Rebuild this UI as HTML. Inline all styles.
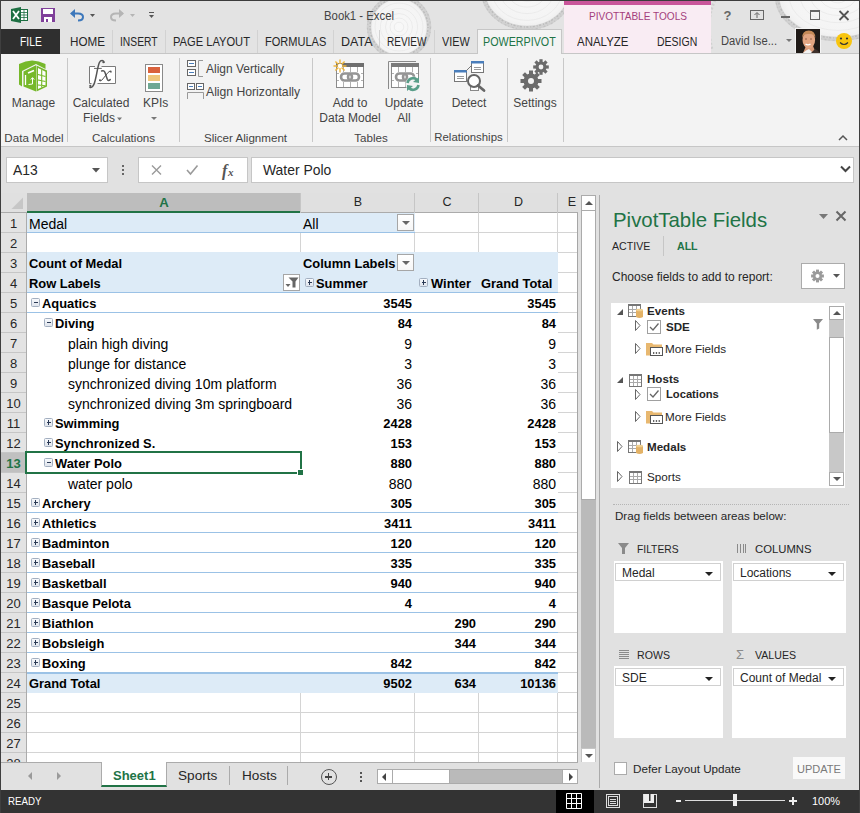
<!DOCTYPE html><html><head><meta charset="utf-8"><style>
*{margin:0;padding:0;box-sizing:border-box}
html,body{width:860px;height:813px;overflow:hidden;background:#e1e1e1;font-family:"Liberation Sans",sans-serif;color:#262626}
.ab{position:absolute}
.t{position:absolute;white-space:nowrap;line-height:1}
</style></head><body>
<div class="ab" style="left:0;top:0;width:860px;height:54px;background:#e3e3e3"></div>
<div class="ab" style="left:0;top:0;width:860px;height:1px;background:#3c3c3c"></div>
<svg class="ab" style="left:0;top:0" width="860" height="54" viewBox="0 0 860 54">
<defs><radialGradient id="wood" cx="0.5" cy="0.5" r="0.5"><stop offset="0" stop-color="#f8f8f8"/><stop offset="0.85" stop-color="#f4f4f4"/><stop offset="1" stop-color="#ededed"/></radialGradient></defs>
<g>
<ellipse cx="399" cy="27" rx="30" ry="30" fill="url(#wood)"/>
<ellipse cx="399" cy="27" rx="30" ry="30" fill="none" stroke="#cbcbcb" stroke-width="4.5" opacity="0.75"/>
<ellipse cx="399" cy="27" rx="29" ry="29" fill="none" stroke="#b4b4b4" stroke-width="1.4" stroke-dasharray="1 2 2 1.5" opacity="0.8"/>
<ellipse cx="399" cy="27" rx="31.5" ry="31.5" fill="none" stroke="#bdbdbd" stroke-width="1.2" stroke-dasharray="2 3 1 2" opacity="0.7"/>
<ellipse cx="399" cy="27" rx="24.0" ry="24.0" fill="none" stroke="#e9e9e9" stroke-width="0.8"/>
<ellipse cx="399" cy="27" rx="18.6" ry="18.6" fill="none" stroke="#e9e9e9" stroke-width="0.8"/>
<ellipse cx="399" cy="27" rx="13.5" ry="13.5" fill="none" stroke="#e9e9e9" stroke-width="0.8"/>
<ellipse cx="399" cy="27" rx="9.0" ry="9.0" fill="none" stroke="#e9e9e9" stroke-width="0.8"/>
<ellipse cx="399" cy="27" rx="4.8" ry="4.8" fill="none" stroke="#e9e9e9" stroke-width="0.8"/>
<ellipse cx="527" cy="-10" rx="44" ry="38" fill="url(#wood)"/>
<ellipse cx="527" cy="-10" rx="44" ry="38" fill="none" stroke="#cbcbcb" stroke-width="4.5" opacity="0.75"/>
<ellipse cx="527" cy="-10" rx="43" ry="37" fill="none" stroke="#b4b4b4" stroke-width="1.4" stroke-dasharray="1 2 2 1.5" opacity="0.8"/>
<ellipse cx="527" cy="-10" rx="45.5" ry="39.5" fill="none" stroke="#bdbdbd" stroke-width="1.2" stroke-dasharray="2 3 1 2" opacity="0.7"/>
<ellipse cx="527" cy="-10" rx="35.2" ry="30.4" fill="none" stroke="#e9e9e9" stroke-width="0.8"/>
<ellipse cx="527" cy="-10" rx="27.3" ry="23.6" fill="none" stroke="#e9e9e9" stroke-width="0.8"/>
<ellipse cx="527" cy="-10" rx="19.8" ry="17.1" fill="none" stroke="#e9e9e9" stroke-width="0.8"/>
<ellipse cx="527" cy="-10" rx="13.2" ry="11.4" fill="none" stroke="#e9e9e9" stroke-width="0.8"/>
<ellipse cx="527" cy="-10" rx="7.0" ry="6.1" fill="none" stroke="#e9e9e9" stroke-width="0.8"/>
<ellipse cx="838" cy="-4" rx="61" ry="43" fill="url(#wood)"/>
<ellipse cx="838" cy="-4" rx="61" ry="43" fill="none" stroke="#cbcbcb" stroke-width="4.5" opacity="0.75"/>
<ellipse cx="838" cy="-4" rx="60" ry="42" fill="none" stroke="#b4b4b4" stroke-width="1.4" stroke-dasharray="1 2 2 1.5" opacity="0.8"/>
<ellipse cx="838" cy="-4" rx="62.5" ry="44.5" fill="none" stroke="#bdbdbd" stroke-width="1.2" stroke-dasharray="2 3 1 2" opacity="0.7"/>
<ellipse cx="838" cy="-4" rx="48.8" ry="34.4" fill="none" stroke="#e9e9e9" stroke-width="0.8"/>
<ellipse cx="838" cy="-4" rx="37.8" ry="26.7" fill="none" stroke="#e9e9e9" stroke-width="0.8"/>
<ellipse cx="838" cy="-4" rx="27.4" ry="19.4" fill="none" stroke="#e9e9e9" stroke-width="0.8"/>
<ellipse cx="838" cy="-4" rx="18.3" ry="12.9" fill="none" stroke="#e9e9e9" stroke-width="0.8"/>
<ellipse cx="838" cy="-4" rx="9.8" ry="6.9" fill="none" stroke="#e9e9e9" stroke-width="0.8"/>
<path d="M715 0 Q705 20 712 50" stroke="#d0d0d0" stroke-width="3" stroke-dasharray="2 2" fill="none"/>
<path d="M608 0 Q620 20 610 54" stroke="#d4d4d4" stroke-width="3" stroke-dasharray="2 2" fill="none"/>
</g>
<!-- excel icon -->
<path d="M11 9 L21 7 L21 23 L11 21 Z" fill="#1d6f42"/>
<rect x="20" y="9" width="8" height="12" fill="#1d6f42"/>
<rect x="21" y="10" width="6" height="10" fill="#fff"/>
<path d="M21 12.5 H27 M21 15 H27 M21 17.5 H27 M24 10 V20" stroke="#1d6f42" stroke-width="0.8"/>
<path d="M13 11 L19 19 M19 11 L13 19" stroke="#fff" stroke-width="1.8"/>
<!-- save -->
<rect x="41" y="8" width="14" height="14" fill="#80409a"/>
<rect x="43" y="9" width="10" height="5" fill="#fff"/>
<rect x="44" y="17" width="8" height="5" fill="#fff"/>
<rect x="46" y="19" width="2" height="3" fill="#80409a"/>
<!-- undo -->
<path d="M71.5 13.5 H78 Q83 13.5 83 17 Q83 20.5 78 20.5" stroke="#3d78bb" stroke-width="2" fill="none"/>
<path d="M70 13.5 L75 9 L75 18 Z" fill="#3d78bb"/>
<path d="M90 14 h5 l-2.5 3z" fill="#555"/>
<path d="M123 13.5 H116 Q111 13.5 111 17 Q111 20.5 116 20.5" stroke="#b5b5b5" stroke-width="2" fill="none"/>
<path d="M124 13.5 L119 9 L119 18 Z" fill="#b5b5b5"/>
<path d="M130 14 h5 l-2.5 3z" fill="#b5b5b5"/>
<rect x="149" y="12" width="5" height="1" fill="#555"/>
<path d="M149 15 h5 l-2.5 3z" fill="#555"/>
<!-- window controls -->
<text x="723.5" y="20" font-family="Liberation Sans" font-weight="bold" font-size="13" fill="#666">?</text>
<rect x="750.5" y="10.5" width="13" height="9" fill="none" stroke="#666"/>
<path d="M757 18 V13 M754.5 15 L757 12.5 L759.5 15" stroke="#666" fill="none"/>
<rect x="781" y="16" width="9" height="2" fill="#666"/>
<rect x="810.5" y="10.5" width="9" height="9" fill="none" stroke="#666"/>
<rect x="810" y="10" width="10" height="2" fill="#666"/>
<path d="M839.5 11 L848.5 20 M848.5 11 L839.5 20" stroke="#555" stroke-width="1.8"/>
<!-- david dropdown -->
<path d="M786 39 h6 l-3 3z" fill="#777"/>
<!-- photo -->
<rect x="795" y="28" width="26" height="26" fill="#f4f4f4"/>
<rect x="796" y="29" width="24" height="24" fill="#1f1a17"/>
<path d="M806 46 L813 46 L816 53 L803 53 Z" fill="#d89a78"/>
<path d="M803 53 Q806 50 809 49 L813 53 Z" fill="#f2f2f2"/>
<path d="M811 53 L815 49 Q818 50 820 53 Z" fill="#3e302b"/>
<ellipse cx="808.8" cy="40" rx="6.3" ry="8.6" fill="#e2a582"/>
<path d="M802.3 38 Q802 30.5 808.8 30.5 Q815.5 30.5 815.3 38 Q814 33.5 808.8 34 Q803.5 33.5 802.3 38 Z" fill="#c58a58"/>
<path d="M805.5 44 Q808 45.8 810.5 44" stroke="#fff" stroke-width="1.4" fill="none"/>
<path d="M805 39 h2 M810 39 h2" stroke="#8a5a44" stroke-width="0.9"/>
<!-- smiley -->
<circle cx="844" cy="41" r="8" fill="#f8c50f"/>
<circle cx="841" cy="38.5" r="1.1" fill="#333"/><circle cx="847" cy="38.5" r="1.1" fill="#333"/>
<path d="M840 42.5 Q844 46.5 848 42.5" stroke="#333" stroke-width="1.1" fill="none"/>
</svg>
<div class="ab" style="left:0;top:0;width:860px;height:1px;background:#3c3c3c"></div>
<div class="ab" style="left:1px;top:29px;width:59px;height:25px;background:#2f2f2f"></div>
<div class="t" style="left:19.5px;top:35.72px;font-size:12.5px;font-weight:normal;color:#fff;transform:scaleX(0.824);transform-origin:0 0">FILE</div>
<div class="t" style="left:70.0px;top:35.72px;font-size:12.5px;font-weight:normal;color:#262626;transform:scaleX(0.933);transform-origin:0 0">HOME</div>
<div class="t" style="left:120.0px;top:35.72px;font-size:12.5px;font-weight:normal;color:#262626;transform:scaleX(0.822);transform-origin:0 0">INSERT</div>
<div class="t" style="left:172.5px;top:35.72px;font-size:12.5px;font-weight:normal;color:#262626;transform:scaleX(0.891);transform-origin:0 0">PAGE LAYOUT</div>
<div class="t" style="left:265.0px;top:35.72px;font-size:12.5px;font-weight:normal;color:#262626;transform:scaleX(0.882);transform-origin:0 0">FORMULAS</div>
<div class="t" style="left:340.75px;top:35.72px;font-size:12.5px;font-weight:normal;color:#262626;transform:scaleX(1.001);transform-origin:0 0">DATA</div>
<div class="t" style="left:387.0px;top:35.72px;font-size:12.5px;font-weight:normal;color:#262626;transform:scaleX(0.801);transform-origin:0 0">REVIEW</div>
<div class="t" style="left:441.5px;top:35.72px;font-size:12.5px;font-weight:normal;color:#262626;transform:scaleX(0.869);transform-origin:0 0">VIEW</div>
<div class="ab" style="left:112px;top:30px;width:1px;height:23px;background:#d2d2d2"></div>
<div class="ab" style="left:165px;top:30px;width:1px;height:23px;background:#d2d2d2"></div>
<div class="ab" style="left:257px;top:30px;width:1px;height:23px;background:#d2d2d2"></div>
<div class="ab" style="left:333px;top:30px;width:1px;height:23px;background:#d2d2d2"></div>
<div class="ab" style="left:379px;top:30px;width:1px;height:23px;background:#d2d2d2"></div>
<div class="ab" style="left:434px;top:30px;width:1px;height:23px;background:#d2d2d2"></div>
<div class="ab" style="left:564px;top:1px;width:147px;height:53px;background:#f9ecf3"></div>
<div class="ab" style="left:564px;top:1px;width:147px;height:4px;background:#c9559a"></div>
<div class="t" style="left:588.5px;top:10.52px;font-size:11.2px;font-weight:normal;color:#a4407c;transform:scaleX(0.901);transform-origin:0 0">PIVOTTABLE TOOLS</div>
<div class="t" style="left:577.0px;top:35.72px;font-size:12.5px;font-weight:normal;color:#262626;transform:scaleX(0.919);transform-origin:0 0">ANALYZE</div>
<div class="t" style="left:657.0px;top:35.72px;font-size:12.5px;font-weight:normal;color:#262626;transform:scaleX(0.840);transform-origin:0 0">DESIGN</div>
<div class="ab" style="left:477px;top:29px;width:85px;height:26px;background:#f3f3f3;border:1px solid #c6c6c6;border-bottom:none"></div>
<div class="t" style="left:482.75px;top:35.72px;font-size:12.5px;font-weight:normal;color:#217346;transform:scaleX(0.859);transform-origin:0 0">POWERPIVOT</div>
<div class="t" style="left:323.5px;top:9.67px;font-size:12.2px;font-weight:normal;color:#444;transform:scaleX(0.931);transform-origin:0 0">Book1 - Excel</div>
<div class="t" style="left:720.75px;top:35.12px;font-size:12.5px;font-weight:normal;color:#444;transform:scaleX(0.896);transform-origin:0 0">David Ise...</div>
<div class="ab" style="left:1px;top:53px;width:858px;height:94px;background:#f3f3f3;border-top:1px solid #c6c6c6;border-bottom:1px solid #c6c6c6"></div>
<div class="ab" style="left:478px;top:52px;width:83px;height:3px;background:#f3f3f3"></div>
<div class="ab" style="left:1px;top:53px;width:59px;height:1px;background:#2f2f2f"></div>
<div class="ab" style="left:67px;top:58px;width:1px;height:84px;background:#c8c8c8"></div>
<div class="ab" style="left:179px;top:58px;width:1px;height:84px;background:#c8c8c8"></div>
<div class="ab" style="left:312px;top:58px;width:1px;height:84px;background:#c8c8c8"></div>
<div class="ab" style="left:430px;top:58px;width:1px;height:84px;background:#c8c8c8"></div>
<div class="ab" style="left:507px;top:58px;width:1px;height:84px;background:#c8c8c8"></div>
<div class="ab" style="left:563px;top:58px;width:1px;height:84px;background:#c8c8c8"></div>
<div class="t" style="left:-66.5px;width:200px;text-align:center;top:96.84px;font-size:12px;color:#444">Manage</div>
<div class="t" style="left:-66px;width:200px;text-align:center;top:131.68px;font-size:11.6px;color:#444">Data Model</div>
<div class="t" style="left:1px;width:200px;text-align:center;top:96.84px;font-size:12px;color:#444">Calculated</div>
<div class="t" style="left:83px;top:112.34px;font-size:12px;color:#444;">Fields</div>
<div class="t" style="left:143px;top:96.84px;font-size:12px;color:#444;">KPIs</div>
<div class="t" style="left:23.5px;width:200px;text-align:center;top:131.68px;font-size:11.6px;color:#444">Calculations</div>
<div class="t" style="left:206px;top:63.34px;font-size:12px;color:#444;">Align Vertically</div>
<div class="t" style="left:206px;top:85.67px;font-size:12.2px;color:#444;">Align Horizontally</div>
<div class="t" style="left:145.5px;width:200px;text-align:center;top:131.68px;font-size:11.6px;color:#444">Slicer Alignment</div>
<div class="t" style="left:250px;width:200px;text-align:center;top:96.84px;font-size:12px;color:#444">Add to</div>
<div class="t" style="left:250px;width:200px;text-align:center;top:111.84px;font-size:12px;color:#444">Data Model</div>
<div class="t" style="left:304px;width:200px;text-align:center;top:96.84px;font-size:12px;color:#444">Update</div>
<div class="t" style="left:304px;width:200px;text-align:center;top:111.84px;font-size:12px;color:#444">All</div>
<div class="t" style="left:271px;width:200px;text-align:center;top:131.68px;font-size:11.6px;color:#444">Tables</div>
<div class="t" style="left:369px;width:200px;text-align:center;top:96.84px;font-size:12px;color:#444">Detect</div>
<div class="t" style="left:435px;width:200px;text-align:center;top:96.84px;font-size:12px;color:#444">Settings</div>
<div class="t" style="left:368.5px;width:200px;text-align:center;top:131.85px;font-size:11.4px;color:#444">Relationships</div>
<svg class="ab" style="left:0;top:0" width="860" height="150" viewBox="0 0 860 150">
<!-- manage -->
<path d="M19 64 Q32 57 45.5 64 L45.5 69 L36 64 L22 71 L22 86.5 L19 84.5 Z" fill="#76b82a"/>
<path d="M23.5 71.5 L36 65.3 L36 91.5 L23.5 86.5 Z" fill="#76b82a"/>
<path d="M36.5 65.5 L47 70.5 L47 86.5 L36.5 91.5 Z" fill="#76b82a"/>
<path d="M38 68 L45.5 71.8 L45.5 85.5 L38 89 Z" fill="#fff"/>
<path d="M41.7 69.5 V87.5 M38 74.5 L45.5 76.5 M38 80 L45.5 81.5 M38 85 L45.5 85.8" stroke="#76b82a" stroke-width="1.1"/>
<path d="M25.5 75 V85" stroke="#fff" stroke-width="1.3"/>
<path d="M28 73 L34 70.5" stroke="#fff" stroke-width="1.6"/>
<path d="M32.5 84 V78 M30.8 79.6 L32.5 77.6 L34.2 79.6 M28.5 84.5 L32.5 84" stroke="#fff" stroke-width="1" fill="none"/>
<!-- fx -->
<path d="M89.5 66.5 H95 M101.5 66.5 H115.5 V83.5 H97.5 M91.5 83.5 H89.5 V66.5" fill="none" stroke="#7a7a7a" stroke-width="1"/>
<rect x="90" y="67" width="25" height="16" fill="#fff"/>
<path d="M104 62.3 C103.8 60.2 100.8 59.8 99.4 62.5 C97.8 65.5 96.6 76 94.6 82.5 C93.6 86 91.8 88 89.9 87.2" fill="none" stroke="#555" stroke-width="1.5" stroke-linecap="round"/>
<circle cx="103.4" cy="62.2" r="1.1" fill="#555"/><circle cx="90.3" cy="85.8" r="1.1" fill="#555"/>
<path d="M94 68.4 H101.8" stroke="#555" stroke-width="0.9"/>
<path d="M101.6 71 Q104 70 105 72.6 L107.3 79.2 Q108.2 81.6 110.2 79.6" fill="none" stroke="#555" stroke-width="1.5" stroke-linecap="round"/>
<path d="M111.2 71.8 Q110 70.2 108 72.5 L102 80 Q100.6 81.6 99.6 80.4" fill="none" stroke="#555" stroke-width="1" stroke-linecap="round"/>
<circle cx="110.6" cy="71.6" r="1" fill="#555"/><circle cx="100" cy="80.3" r="1" fill="#555"/>
<path d="M117 117.5 h5 l-2.5 3z" fill="#777"/>
<!-- KPI -->
<rect x="145.5" y="64.5" width="17" height="27" fill="#fff" stroke="#8a8a8a"/>
<rect x="148" y="67" width="12" height="6" fill="#d9623d"/>
<rect x="148" y="75" width="12" height="6" fill="#efc77c"/>
<rect x="148" y="83" width="12" height="6" fill="#6fa893"/>
<path d="M151 117 h6 l-3 3z" fill="#777"/>
<!-- align vertically -->
<rect x="187.5" y="60.5" width="8" height="6" fill="#fff" stroke="#666"/>
<rect x="189" y="63" width="5" height="1" fill="#4a7ebb"/>
<rect x="187.5" y="69.5" width="8" height="6" fill="#fff" stroke="#666"/>
<rect x="189" y="72" width="5" height="1" fill="#4a7ebb"/>
<path d="M203 60.5 H198.5 V76.5 H203" fill="none" stroke="#999"/>
<!-- align horizontally -->
<rect x="187.5" y="83.5" width="7" height="6" fill="#fff" stroke="#666"/>
<rect x="189" y="86" width="4" height="1" fill="#4a7ebb"/>
<rect x="196.5" y="83.5" width="7" height="6" fill="#fff" stroke="#666"/>
<rect x="198" y="86" width="4" height="1" fill="#4a7ebb"/>
<path d="M187.5 99 V92.5 H203.5 V99" fill="none" stroke="#999"/>
<!-- add to data model -->
<rect x="336.5" y="63.5" width="27" height="24" fill="#fff" stroke="#8a8a8a"/>
<rect x="336" y="63" width="28" height="4" fill="#6e6e6e"/>
<path d="M337 73.5 H363 M337 80.5 H363 M343.5 67 V87 M350.5 67 V87 M357.5 67 V87" stroke="#b0b0b0" stroke-width="1"/>
<rect x="339" y="72" width="22" height="10" fill="#fff"/>
<rect x="341" y="73.5" width="11" height="7" rx="3.5" fill="none" stroke="#959595" stroke-width="2.6"/>
<rect x="348" y="73.5" width="11" height="7" rx="3.5" fill="none" stroke="#959595" stroke-width="2.6"/>
<g stroke="#efb63c" stroke-width="1.4"><path d="M340 59.5 V72.5 M333.5 66 H346.5 M335.4 61.4 L344.6 70.6 M344.6 61.4 L335.4 70.6"/></g>
<circle cx="340" cy="66" r="2.2" fill="#fff"/>
<!-- update all -->
<path d="M388.5 89 V61.5 H416" fill="none" stroke="#8a8a8a"/>
<rect x="391.5" y="63.5" width="27" height="24" fill="#fff" stroke="#8a8a8a"/>
<rect x="391" y="63" width="28" height="4" fill="#7a7a7a"/>
<path d="M392 73.5 H418 M392 80.5 H418 M398.5 67 V87 M405.5 67 V87 M412.5 67 V87" stroke="#b0b0b0" stroke-width="1"/>
<rect x="394" y="72" width="22" height="10" fill="#fff"/>
<rect x="396" y="73.5" width="11" height="7" rx="3.5" fill="none" stroke="#959595" stroke-width="2.6"/>
<rect x="403" y="73.5" width="11" height="7" rx="3.5" fill="none" stroke="#959595" stroke-width="2.6"/>
<circle cx="413" cy="84" r="7.5" fill="#f3f3f3"/>
<path d="M407.5 83 A5.5 5.5 0 0 1 417 80" stroke="#5a9e89" stroke-width="2.6" fill="none"/>
<path d="M419 77 L419 83 L413 82 Z" fill="#5a9e89"/>
<path d="M418.5 85 A5.5 5.5 0 0 1 409 88" stroke="#5a9e89" stroke-width="2.6" fill="none"/>
<path d="M407 91 L407 85 L413 86 Z" fill="#5a9e89"/>
<!-- detect -->
<rect x="454.5" y="70.5" width="12" height="11" fill="#fff" stroke="#777"/>
<rect x="454" y="70" width="13" height="2.5" fill="#4a7ebb"/>
<path d="M457 76.5 H464 M457 78.5 H464" stroke="#999"/>
<rect x="471.5" y="61.5" width="12" height="11" fill="#fff" stroke="#777"/>
<rect x="471" y="61" width="13" height="2.5" fill="#4a7ebb"/>
<path d="M474 67.5 H481 M474 69.5 H481" stroke="#999"/>
<path d="M466 71 L471 66" stroke="#777"/>
<rect x="470.5" y="85.5" width="8" height="5" fill="#fff" stroke="#888"/>
<circle cx="474" cy="81" r="6" fill="#fff" stroke="#666" stroke-width="2"/>
<path d="M478 85.5 L484 90.5" stroke="#666" stroke-width="2.8" stroke-linecap="round"/>
<!-- settings -->
<g fill="#6b6b6b">
<circle cx="531" cy="81" r="7.5"/>
<g transform="translate(531 81)"><rect x="-2" y="-10.5" width="4" height="21"/><rect x="-2" y="-10.5" width="4" height="21" transform="rotate(45)"/><rect x="-2" y="-10.5" width="4" height="21" transform="rotate(90)"/><rect x="-2" y="-10.5" width="4" height="21" transform="rotate(135)"/></g>
<circle cx="541" cy="67" r="5.5"/>
<g transform="translate(541 67)"><rect x="-1.6" y="-7.8" width="3.2" height="15.6"/><rect x="-1.6" y="-7.8" width="3.2" height="15.6" transform="rotate(45)"/><rect x="-1.6" y="-7.8" width="3.2" height="15.6" transform="rotate(90)"/><rect x="-1.6" y="-7.8" width="3.2" height="15.6" transform="rotate(135)"/></g>
</g>
<circle cx="531" cy="81" r="3" fill="#f3f3f3"/>
<circle cx="541" cy="67" r="2.4" fill="#f3f3f3"/>
<!-- collapse -->
<path d="M839 140 L843 136 L847 140" stroke="#555" stroke-width="1.5" fill="none"/>
</svg>
<div class="ab" style="left:6px;top:157px;width:102px;height:26px;background:#fff;border:1px solid #c6c6c6"></div>
<div class="t" style="left:13px;top:163.5px;font-size:13.9px;color:#262626">A13</div>
<div class="ab" style="left:138px;top:157px;width:110px;height:26px;background:#fff;border:1px solid #c6c6c6"></div>
<div class="ab" style="left:251px;top:157px;width:603px;height:26px;background:#fff;border:1px solid #c6c6c6"></div>
<div class="t" style="left:263px;top:163.5px;font-size:13.9px;color:#262626">Water Polo</div>
<svg class="ab" style="left:0;top:150px" width="860" height="45" viewBox="0 150 860 45">
<path d="M92 168 h8 l-4 4.5z" fill="#555"/>
<rect x="122" y="165" width="2" height="2" fill="#666"/><rect x="122" y="169" width="2" height="2" fill="#666"/><rect x="122" y="173" width="2" height="2" fill="#666"/>
<path d="M152 165.5 L161 174.5 M161 165.5 L152 174.5" stroke="#9a9a9a" stroke-width="1.4"/>
<path d="M187 170 L190.5 174 L197.5 165.5" stroke="#9a9a9a" stroke-width="1.6" fill="none"/>
<text x="222" y="176" font-family="Liberation Serif" font-style="italic" font-weight="bold" font-size="16" fill="#555">f</text>
<text x="228" y="176" font-family="Liberation Serif" font-style="italic" font-weight="bold" font-size="11" fill="#555">x</text>
<path d="M841 166.5 L845.5 171 L850 166.5" stroke="#444" stroke-width="2" fill="none"/>
<path d="M9 209 L23 195 L23 209 Z" fill="#c6c6c6"/>
</svg>
<div class="ab" style="left:1px;top:193px;width:577px;height:570px;background:#fff"></div>
<div class="ab" style="left:1px;top:193px;width:577px;height:20px;background:#e0e0e0;border-bottom:1px solid #ababab"></div>
<div class="ab" style="left:27px;top:193px;width:274px;height:20px;background:#bdbdbd;border-bottom:2px solid #217346"></div>
<div class="t" style="left:27px;top:195.63px;width:274px;text-align:center;font-size:13.2px;font-weight:bold;color:#217346">A</div>
<div class="ab" style="left:300px;top:193px;width:1px;height:20px;background:#c6c6c6"></div>
<div class="t" style="left:301px;top:196.22px;width:114px;text-align:center;font-size:12.5px;font-weight:normal;color:#262626">B</div>
<div class="ab" style="left:414px;top:193px;width:1px;height:20px;background:#c6c6c6"></div>
<div class="t" style="left:415px;top:196.22px;width:64px;text-align:center;font-size:12.5px;font-weight:normal;color:#262626">C</div>
<div class="ab" style="left:478px;top:193px;width:1px;height:20px;background:#c6c6c6"></div>
<div class="t" style="left:479px;top:196.22px;width:79px;text-align:center;font-size:12.5px;font-weight:normal;color:#262626">D</div>
<div class="ab" style="left:557px;top:193px;width:1px;height:20px;background:#c6c6c6"></div>
<div class="t" style="left:562px;top:196.22px;width:20px;text-align:center;font-size:12.5px;font-weight:normal;color:#262626">E</div>
<svg class="ab" style="left:0;top:193px" width="27" height="20"><path d="M11.5 16 L23 4.5 L23 16 Z" fill="#c6c6c6"/></svg>
<div class="ab" style="left:1px;top:213px;width:26px;height:550px;background:#e3e3e3;border-right:1px solid #ababab"></div>
<div class="ab" style="left:1px;top:213px;width:25px;height:20px;background:transparent;border-bottom:1px solid #c6c6c6"></div>
<div class="t" style="left:1px;top:217px;width:25px;text-align:center;font-size:13px;font-weight:normal;color:#262626">1</div>
<div class="ab" style="left:1px;top:233px;width:25px;height:20px;background:transparent;border-bottom:1px solid #c6c6c6"></div>
<div class="t" style="left:1px;top:237px;width:25px;text-align:center;font-size:13px;font-weight:normal;color:#262626">2</div>
<div class="ab" style="left:1px;top:253px;width:25px;height:20px;background:transparent;border-bottom:1px solid #c6c6c6"></div>
<div class="t" style="left:1px;top:257px;width:25px;text-align:center;font-size:13px;font-weight:normal;color:#262626">3</div>
<div class="ab" style="left:1px;top:273px;width:25px;height:20px;background:transparent;border-bottom:1px solid #c6c6c6"></div>
<div class="t" style="left:1px;top:277px;width:25px;text-align:center;font-size:13px;font-weight:normal;color:#262626">4</div>
<div class="ab" style="left:1px;top:293px;width:25px;height:20px;background:transparent;border-bottom:1px solid #c6c6c6"></div>
<div class="t" style="left:1px;top:297px;width:25px;text-align:center;font-size:13px;font-weight:normal;color:#262626">5</div>
<div class="ab" style="left:1px;top:313px;width:25px;height:20px;background:transparent;border-bottom:1px solid #c6c6c6"></div>
<div class="t" style="left:1px;top:317px;width:25px;text-align:center;font-size:13px;font-weight:normal;color:#262626">6</div>
<div class="ab" style="left:1px;top:333px;width:25px;height:20px;background:transparent;border-bottom:1px solid #c6c6c6"></div>
<div class="t" style="left:1px;top:337px;width:25px;text-align:center;font-size:13px;font-weight:normal;color:#262626">7</div>
<div class="ab" style="left:1px;top:353px;width:25px;height:20px;background:transparent;border-bottom:1px solid #c6c6c6"></div>
<div class="t" style="left:1px;top:357px;width:25px;text-align:center;font-size:13px;font-weight:normal;color:#262626">8</div>
<div class="ab" style="left:1px;top:373px;width:25px;height:20px;background:transparent;border-bottom:1px solid #c6c6c6"></div>
<div class="t" style="left:1px;top:377px;width:25px;text-align:center;font-size:13px;font-weight:normal;color:#262626">9</div>
<div class="ab" style="left:1px;top:393px;width:25px;height:20px;background:transparent;border-bottom:1px solid #c6c6c6"></div>
<div class="t" style="left:1px;top:397px;width:25px;text-align:center;font-size:13px;font-weight:normal;color:#262626">10</div>
<div class="ab" style="left:1px;top:413px;width:25px;height:20px;background:transparent;border-bottom:1px solid #c6c6c6"></div>
<div class="t" style="left:1px;top:417px;width:25px;text-align:center;font-size:13px;font-weight:normal;color:#262626">11</div>
<div class="ab" style="left:1px;top:433px;width:25px;height:20px;background:transparent;border-bottom:1px solid #c6c6c6"></div>
<div class="t" style="left:1px;top:437px;width:25px;text-align:center;font-size:13px;font-weight:normal;color:#262626">12</div>
<div class="ab" style="left:1px;top:453px;width:25px;height:20px;background:#c0c0c0;border-bottom:1px solid #c6c6c6"></div>
<div class="t" style="left:1px;top:457px;width:25px;text-align:center;font-size:13px;font-weight:bold;color:#217346">13</div>
<div class="ab" style="left:1px;top:473px;width:25px;height:20px;background:transparent;border-bottom:1px solid #c6c6c6"></div>
<div class="t" style="left:1px;top:477px;width:25px;text-align:center;font-size:13px;font-weight:normal;color:#262626">14</div>
<div class="ab" style="left:1px;top:493px;width:25px;height:20px;background:transparent;border-bottom:1px solid #c6c6c6"></div>
<div class="t" style="left:1px;top:497px;width:25px;text-align:center;font-size:13px;font-weight:normal;color:#262626">15</div>
<div class="ab" style="left:1px;top:513px;width:25px;height:20px;background:transparent;border-bottom:1px solid #c6c6c6"></div>
<div class="t" style="left:1px;top:517px;width:25px;text-align:center;font-size:13px;font-weight:normal;color:#262626">16</div>
<div class="ab" style="left:1px;top:533px;width:25px;height:20px;background:transparent;border-bottom:1px solid #c6c6c6"></div>
<div class="t" style="left:1px;top:537px;width:25px;text-align:center;font-size:13px;font-weight:normal;color:#262626">17</div>
<div class="ab" style="left:1px;top:553px;width:25px;height:20px;background:transparent;border-bottom:1px solid #c6c6c6"></div>
<div class="t" style="left:1px;top:557px;width:25px;text-align:center;font-size:13px;font-weight:normal;color:#262626">18</div>
<div class="ab" style="left:1px;top:573px;width:25px;height:20px;background:transparent;border-bottom:1px solid #c6c6c6"></div>
<div class="t" style="left:1px;top:577px;width:25px;text-align:center;font-size:13px;font-weight:normal;color:#262626">19</div>
<div class="ab" style="left:1px;top:593px;width:25px;height:20px;background:transparent;border-bottom:1px solid #c6c6c6"></div>
<div class="t" style="left:1px;top:597px;width:25px;text-align:center;font-size:13px;font-weight:normal;color:#262626">20</div>
<div class="ab" style="left:1px;top:613px;width:25px;height:20px;background:transparent;border-bottom:1px solid #c6c6c6"></div>
<div class="t" style="left:1px;top:617px;width:25px;text-align:center;font-size:13px;font-weight:normal;color:#262626">21</div>
<div class="ab" style="left:1px;top:633px;width:25px;height:20px;background:transparent;border-bottom:1px solid #c6c6c6"></div>
<div class="t" style="left:1px;top:637px;width:25px;text-align:center;font-size:13px;font-weight:normal;color:#262626">22</div>
<div class="ab" style="left:1px;top:653px;width:25px;height:20px;background:transparent;border-bottom:1px solid #c6c6c6"></div>
<div class="t" style="left:1px;top:657px;width:25px;text-align:center;font-size:13px;font-weight:normal;color:#262626">23</div>
<div class="ab" style="left:1px;top:673px;width:25px;height:20px;background:transparent;border-bottom:1px solid #c6c6c6"></div>
<div class="t" style="left:1px;top:677px;width:25px;text-align:center;font-size:13px;font-weight:normal;color:#262626">24</div>
<div class="ab" style="left:1px;top:693px;width:25px;height:20px;background:transparent;border-bottom:1px solid #c6c6c6"></div>
<div class="t" style="left:1px;top:697px;width:25px;text-align:center;font-size:13px;font-weight:normal;color:#262626">25</div>
<div class="ab" style="left:1px;top:713px;width:25px;height:20px;background:transparent;border-bottom:1px solid #c6c6c6"></div>
<div class="t" style="left:1px;top:717px;width:25px;text-align:center;font-size:13px;font-weight:normal;color:#262626">26</div>
<div class="ab" style="left:1px;top:733px;width:25px;height:20px;background:transparent;border-bottom:1px solid #c6c6c6"></div>
<div class="t" style="left:1px;top:737px;width:25px;text-align:center;font-size:13px;font-weight:normal;color:#262626">27</div>
<div class="ab" style="left:1px;top:753px;width:25px;height:20px;background:transparent;border-bottom:1px solid #c6c6c6"></div>
<div class="t" style="left:1px;top:757px;width:25px;text-align:center;font-size:13px;font-weight:normal;color:#262626">28</div>
<div class="ab" style="left:27px;top:232px;width:551px;height:1px;background:#d4d4d4"></div>
<div class="ab" style="left:27px;top:252px;width:551px;height:1px;background:#d4d4d4"></div>
<div class="ab" style="left:27px;top:272px;width:551px;height:1px;background:#d4d4d4"></div>
<div class="ab" style="left:27px;top:292px;width:551px;height:1px;background:#d4d4d4"></div>
<div class="ab" style="left:27px;top:312px;width:551px;height:1px;background:#d4d4d4"></div>
<div class="ab" style="left:27px;top:332px;width:551px;height:1px;background:#d4d4d4"></div>
<div class="ab" style="left:27px;top:352px;width:551px;height:1px;background:#d4d4d4"></div>
<div class="ab" style="left:27px;top:372px;width:551px;height:1px;background:#d4d4d4"></div>
<div class="ab" style="left:27px;top:392px;width:551px;height:1px;background:#d4d4d4"></div>
<div class="ab" style="left:27px;top:412px;width:551px;height:1px;background:#d4d4d4"></div>
<div class="ab" style="left:27px;top:432px;width:551px;height:1px;background:#d4d4d4"></div>
<div class="ab" style="left:27px;top:452px;width:551px;height:1px;background:#d4d4d4"></div>
<div class="ab" style="left:27px;top:472px;width:551px;height:1px;background:#d4d4d4"></div>
<div class="ab" style="left:27px;top:492px;width:551px;height:1px;background:#d4d4d4"></div>
<div class="ab" style="left:27px;top:512px;width:551px;height:1px;background:#d4d4d4"></div>
<div class="ab" style="left:27px;top:532px;width:551px;height:1px;background:#d4d4d4"></div>
<div class="ab" style="left:27px;top:552px;width:551px;height:1px;background:#d4d4d4"></div>
<div class="ab" style="left:27px;top:572px;width:551px;height:1px;background:#d4d4d4"></div>
<div class="ab" style="left:27px;top:592px;width:551px;height:1px;background:#d4d4d4"></div>
<div class="ab" style="left:27px;top:612px;width:551px;height:1px;background:#d4d4d4"></div>
<div class="ab" style="left:27px;top:632px;width:551px;height:1px;background:#d4d4d4"></div>
<div class="ab" style="left:27px;top:652px;width:551px;height:1px;background:#d4d4d4"></div>
<div class="ab" style="left:27px;top:672px;width:551px;height:1px;background:#d4d4d4"></div>
<div class="ab" style="left:27px;top:692px;width:551px;height:1px;background:#d4d4d4"></div>
<div class="ab" style="left:27px;top:712px;width:551px;height:1px;background:#d4d4d4"></div>
<div class="ab" style="left:27px;top:732px;width:551px;height:1px;background:#d4d4d4"></div>
<div class="ab" style="left:27px;top:752px;width:551px;height:1px;background:#d4d4d4"></div>
<div class="ab" style="left:27px;top:772px;width:551px;height:1px;background:#d4d4d4"></div>
<div class="ab" style="left:300px;top:213px;width:1px;height:550px;background:#d4d4d4"></div>
<div class="ab" style="left:414px;top:213px;width:1px;height:550px;background:#d4d4d4"></div>
<div class="ab" style="left:478px;top:213px;width:1px;height:550px;background:#d4d4d4"></div>
<div class="ab" style="left:557px;top:213px;width:1px;height:550px;background:#d4d4d4"></div>
<div class="ab" style="left:577px;top:213px;width:1px;height:550px;background:#d4d4d4"></div>
<div class="ab" style="left:27px;top:253px;width:531px;height:440px;background:#fff"></div>
<div class="ab" style="left:27px;top:213px;width:388px;height:20px;background:#ddebf7;border-bottom:1px solid #9bc2e6"></div>
<div class="ab" style="left:27px;top:233px;width:388px;height:19px;background:#fff"></div>
<div class="ab" style="left:300px;top:233px;width:1px;height:20px;background:#d4d4d4"></div>
<div class="ab" style="left:414px;top:233px;width:1px;height:20px;background:#d4d4d4"></div>
<div class="ab" style="left:27px;top:252px;width:531px;height:41px;background:#ddebf7;border-bottom:1px solid #9bc2e6"></div>
<div class="ab" style="left:27px;top:312px;width:531px;height:1px;background:#9bc2e6"></div>
<div class="ab" style="left:27px;top:512px;width:531px;height:1px;background:#9bc2e6"></div>
<div class="ab" style="left:27px;top:532px;width:531px;height:1px;background:#9bc2e6"></div>
<div class="ab" style="left:27px;top:552px;width:531px;height:1px;background:#9bc2e6"></div>
<div class="ab" style="left:27px;top:572px;width:531px;height:1px;background:#9bc2e6"></div>
<div class="ab" style="left:27px;top:592px;width:531px;height:1px;background:#9bc2e6"></div>
<div class="ab" style="left:27px;top:612px;width:531px;height:1px;background:#9bc2e6"></div>
<div class="ab" style="left:27px;top:632px;width:531px;height:1px;background:#9bc2e6"></div>
<div class="ab" style="left:27px;top:652px;width:531px;height:1px;background:#9bc2e6"></div>
<div class="ab" style="left:27px;top:672px;width:531px;height:1px;background:#9bc2e6"></div>
<div class="ab" style="left:27px;top:673px;width:531px;height:20px;background:#ddebf7;border-top:1px solid #9bc2e6"></div>
<div class="t" style="left:29px;top:217.15px;font-size:14.0px;font-weight:normal;color:#000">Medal</div>
<div class="t" style="left:303px;top:217.15px;font-size:14.0px;font-weight:normal;color:#000">All</div>
<div class="ab" style="left:397px;top:214px;width:17px;height:17px;border:1px solid #a6a6a6;background:linear-gradient(#fff,#f6f6f6)"><div class="ab" style="left:3.5px;top:6px;width:0;height:0;border-left:4.5px solid transparent;border-right:4.5px solid transparent;border-top:4.5px solid #666"></div></div>
<div class="t" style="left:29px;top:258.08px;font-size:12.9px;font-weight:bold;color:#000">Count of Medal</div>
<div class="t" style="left:303px;top:258.08px;font-size:12.9px;font-weight:bold;color:#000">Column Labels</div>
<div class="ab" style="left:397px;top:254px;width:17px;height:17px;border:1px solid #a6a6a6;background:linear-gradient(#fff,#f6f6f6)"><div class="ab" style="left:3.5px;top:6px;width:0;height:0;border-left:4.5px solid transparent;border-right:4.5px solid transparent;border-top:4.5px solid #666"></div></div>
<div class="t" style="left:29px;top:278.08px;font-size:12.9px;font-weight:bold;color:#000">Row Labels</div>
<svg class="ab" style="left:283px;top:274px" width="17" height="17" viewBox="283 274 17 17"><rect x="283.5" y="274.5" width="16" height="16" fill="#fff" stroke="#a6a6a6"/><path d="M288.5 277.5 H298.5 L295.5 281.5 V287.5 H292.5 V281.5 Z" fill="#666"/><path d="M285.5 284 h5 l-2.5 3z" fill="#666"/></svg>
<div class="ab" style="left:305px;top:278px;width:9px;height:9px;border:1px solid #a3afc0;border-radius:1.5px;background:linear-gradient(#f7f9fc,#dfe4ec)"><div class="ab" style="left:1.5px;top:3px;width:4.5px;height:1px;background:#2b3a55"></div><div class="ab" style="left:3.3px;top:1px;width:1px;height:5px;background:#2b3a55"></div></div>
<div class="t" style="left:316px;top:278.08px;font-size:12.9px;font-weight:bold;color:#000">Summer</div>
<div class="ab" style="left:419px;top:278px;width:9px;height:9px;border:1px solid #a3afc0;border-radius:1.5px;background:linear-gradient(#f7f9fc,#dfe4ec)"><div class="ab" style="left:1.5px;top:3px;width:4.5px;height:1px;background:#2b3a55"></div><div class="ab" style="left:3.3px;top:1px;width:1px;height:5px;background:#2b3a55"></div></div>
<div class="t" style="left:431px;top:278.08px;font-size:12.9px;font-weight:bold;color:#000">Winter</div>
<div class="t" style="left:481px;top:278.08px;font-size:12.9px;font-weight:bold;color:#000">Grand Total</div>
<div class="ab" style="left:31px;top:298px;width:9px;height:9px;border:1px solid #a3afc0;border-radius:1.5px;background:linear-gradient(#f7f9fc,#dfe4ec)"><div class="ab" style="left:1.5px;top:3px;width:4.5px;height:1px;background:#2b3a55"></div></div>
<div class="t" style="left:42px;top:298.08px;font-size:12.9px;font-weight:bold;color:#000">Aquatics</div>
<div class="t" style="right:448px;top:298.08px;font-size:12.9px;font-weight:bold;color:#000">3545</div>
<div class="t" style="right:304px;top:298.08px;font-size:12.9px;font-weight:bold;color:#000">3545</div>
<div class="ab" style="left:44px;top:318px;width:9px;height:9px;border:1px solid #a3afc0;border-radius:1.5px;background:linear-gradient(#f7f9fc,#dfe4ec)"><div class="ab" style="left:1.5px;top:3px;width:4.5px;height:1px;background:#2b3a55"></div></div>
<div class="t" style="left:55px;top:318.08px;font-size:12.9px;font-weight:bold;color:#000">Diving</div>
<div class="t" style="right:448px;top:318.08px;font-size:12.9px;font-weight:bold;color:#000">84</div>
<div class="t" style="right:304px;top:318.08px;font-size:12.9px;font-weight:bold;color:#000">84</div>
<div class="t" style="left:68px;top:337.15px;font-size:14.0px;font-weight:normal;color:#000">plain high diving</div>
<div class="t" style="right:448px;top:337.15px;font-size:14.0px;font-weight:normal;color:#000">9</div>
<div class="t" style="right:304px;top:337.15px;font-size:14.0px;font-weight:normal;color:#000">9</div>
<div class="t" style="left:68px;top:357.15px;font-size:14.0px;font-weight:normal;color:#000">plunge for distance</div>
<div class="t" style="right:448px;top:357.15px;font-size:14.0px;font-weight:normal;color:#000">3</div>
<div class="t" style="right:304px;top:357.15px;font-size:14.0px;font-weight:normal;color:#000">3</div>
<div class="t" style="left:68px;top:377.15px;font-size:14.0px;font-weight:normal;color:#000">synchronized diving 10m platform</div>
<div class="t" style="right:448px;top:377.15px;font-size:14.0px;font-weight:normal;color:#000">36</div>
<div class="t" style="right:304px;top:377.15px;font-size:14.0px;font-weight:normal;color:#000">36</div>
<div class="t" style="left:68px;top:397.15px;font-size:14.0px;font-weight:normal;color:#000">synchronized diving 3m springboard</div>
<div class="t" style="right:448px;top:397.15px;font-size:14.0px;font-weight:normal;color:#000">36</div>
<div class="t" style="right:304px;top:397.15px;font-size:14.0px;font-weight:normal;color:#000">36</div>
<div class="ab" style="left:44px;top:418px;width:9px;height:9px;border:1px solid #a3afc0;border-radius:1.5px;background:linear-gradient(#f7f9fc,#dfe4ec)"><div class="ab" style="left:1.5px;top:3px;width:4.5px;height:1px;background:#2b3a55"></div><div class="ab" style="left:3.3px;top:1px;width:1px;height:5px;background:#2b3a55"></div></div>
<div class="t" style="left:55px;top:418.08px;font-size:12.9px;font-weight:bold;color:#000">Swimming</div>
<div class="t" style="right:448px;top:418.08px;font-size:12.9px;font-weight:bold;color:#000">2428</div>
<div class="t" style="right:304px;top:418.08px;font-size:12.9px;font-weight:bold;color:#000">2428</div>
<div class="ab" style="left:44px;top:438px;width:9px;height:9px;border:1px solid #a3afc0;border-radius:1.5px;background:linear-gradient(#f7f9fc,#dfe4ec)"><div class="ab" style="left:1.5px;top:3px;width:4.5px;height:1px;background:#2b3a55"></div><div class="ab" style="left:3.3px;top:1px;width:1px;height:5px;background:#2b3a55"></div></div>
<div class="t" style="left:55px;top:438.08px;font-size:12.9px;font-weight:bold;color:#000">Synchronized S.</div>
<div class="t" style="right:448px;top:438.08px;font-size:12.9px;font-weight:bold;color:#000">153</div>
<div class="t" style="right:304px;top:438.08px;font-size:12.9px;font-weight:bold;color:#000">153</div>
<div class="ab" style="left:44px;top:458px;width:9px;height:9px;border:1px solid #a3afc0;border-radius:1.5px;background:linear-gradient(#f7f9fc,#dfe4ec)"><div class="ab" style="left:1.5px;top:3px;width:4.5px;height:1px;background:#2b3a55"></div></div>
<div class="t" style="left:55px;top:458.08px;font-size:12.9px;font-weight:bold;color:#000">Water Polo</div>
<div class="t" style="right:448px;top:458.08px;font-size:12.9px;font-weight:bold;color:#000">880</div>
<div class="t" style="right:304px;top:458.08px;font-size:12.9px;font-weight:bold;color:#000">880</div>
<div class="t" style="left:68px;top:477.15px;font-size:14.0px;font-weight:normal;color:#000">water polo</div>
<div class="t" style="right:448px;top:477.15px;font-size:14.0px;font-weight:normal;color:#000">880</div>
<div class="t" style="right:304px;top:477.15px;font-size:14.0px;font-weight:normal;color:#000">880</div>
<div class="ab" style="left:31px;top:498px;width:9px;height:9px;border:1px solid #a3afc0;border-radius:1.5px;background:linear-gradient(#f7f9fc,#dfe4ec)"><div class="ab" style="left:1.5px;top:3px;width:4.5px;height:1px;background:#2b3a55"></div><div class="ab" style="left:3.3px;top:1px;width:1px;height:5px;background:#2b3a55"></div></div>
<div class="t" style="left:42px;top:498.08px;font-size:12.9px;font-weight:bold;color:#000">Archery</div>
<div class="t" style="right:448px;top:498.08px;font-size:12.9px;font-weight:bold;color:#000">305</div>
<div class="t" style="right:304px;top:498.08px;font-size:12.9px;font-weight:bold;color:#000">305</div>
<div class="ab" style="left:31px;top:518px;width:9px;height:9px;border:1px solid #a3afc0;border-radius:1.5px;background:linear-gradient(#f7f9fc,#dfe4ec)"><div class="ab" style="left:1.5px;top:3px;width:4.5px;height:1px;background:#2b3a55"></div><div class="ab" style="left:3.3px;top:1px;width:1px;height:5px;background:#2b3a55"></div></div>
<div class="t" style="left:42px;top:518.08px;font-size:12.9px;font-weight:bold;color:#000">Athletics</div>
<div class="t" style="right:448px;top:518.08px;font-size:12.9px;font-weight:bold;color:#000">3411</div>
<div class="t" style="right:304px;top:518.08px;font-size:12.9px;font-weight:bold;color:#000">3411</div>
<div class="ab" style="left:31px;top:538px;width:9px;height:9px;border:1px solid #a3afc0;border-radius:1.5px;background:linear-gradient(#f7f9fc,#dfe4ec)"><div class="ab" style="left:1.5px;top:3px;width:4.5px;height:1px;background:#2b3a55"></div><div class="ab" style="left:3.3px;top:1px;width:1px;height:5px;background:#2b3a55"></div></div>
<div class="t" style="left:42px;top:538.08px;font-size:12.9px;font-weight:bold;color:#000">Badminton</div>
<div class="t" style="right:448px;top:538.08px;font-size:12.9px;font-weight:bold;color:#000">120</div>
<div class="t" style="right:304px;top:538.08px;font-size:12.9px;font-weight:bold;color:#000">120</div>
<div class="ab" style="left:31px;top:558px;width:9px;height:9px;border:1px solid #a3afc0;border-radius:1.5px;background:linear-gradient(#f7f9fc,#dfe4ec)"><div class="ab" style="left:1.5px;top:3px;width:4.5px;height:1px;background:#2b3a55"></div><div class="ab" style="left:3.3px;top:1px;width:1px;height:5px;background:#2b3a55"></div></div>
<div class="t" style="left:42px;top:558.08px;font-size:12.9px;font-weight:bold;color:#000">Baseball</div>
<div class="t" style="right:448px;top:558.08px;font-size:12.9px;font-weight:bold;color:#000">335</div>
<div class="t" style="right:304px;top:558.08px;font-size:12.9px;font-weight:bold;color:#000">335</div>
<div class="ab" style="left:31px;top:578px;width:9px;height:9px;border:1px solid #a3afc0;border-radius:1.5px;background:linear-gradient(#f7f9fc,#dfe4ec)"><div class="ab" style="left:1.5px;top:3px;width:4.5px;height:1px;background:#2b3a55"></div><div class="ab" style="left:3.3px;top:1px;width:1px;height:5px;background:#2b3a55"></div></div>
<div class="t" style="left:42px;top:578.08px;font-size:12.9px;font-weight:bold;color:#000">Basketball</div>
<div class="t" style="right:448px;top:578.08px;font-size:12.9px;font-weight:bold;color:#000">940</div>
<div class="t" style="right:304px;top:578.08px;font-size:12.9px;font-weight:bold;color:#000">940</div>
<div class="ab" style="left:31px;top:598px;width:9px;height:9px;border:1px solid #a3afc0;border-radius:1.5px;background:linear-gradient(#f7f9fc,#dfe4ec)"><div class="ab" style="left:1.5px;top:3px;width:4.5px;height:1px;background:#2b3a55"></div><div class="ab" style="left:3.3px;top:1px;width:1px;height:5px;background:#2b3a55"></div></div>
<div class="t" style="left:42px;top:598.08px;font-size:12.9px;font-weight:bold;color:#000">Basque Pelota</div>
<div class="t" style="right:448px;top:598.08px;font-size:12.9px;font-weight:bold;color:#000">4</div>
<div class="t" style="right:304px;top:598.08px;font-size:12.9px;font-weight:bold;color:#000">4</div>
<div class="ab" style="left:31px;top:618px;width:9px;height:9px;border:1px solid #a3afc0;border-radius:1.5px;background:linear-gradient(#f7f9fc,#dfe4ec)"><div class="ab" style="left:1.5px;top:3px;width:4.5px;height:1px;background:#2b3a55"></div><div class="ab" style="left:3.3px;top:1px;width:1px;height:5px;background:#2b3a55"></div></div>
<div class="t" style="left:42px;top:618.08px;font-size:12.9px;font-weight:bold;color:#000">Biathlon</div>
<div class="t" style="right:384px;top:618.08px;font-size:12.9px;font-weight:bold;color:#000">290</div>
<div class="t" style="right:304px;top:618.08px;font-size:12.9px;font-weight:bold;color:#000">290</div>
<div class="ab" style="left:31px;top:638px;width:9px;height:9px;border:1px solid #a3afc0;border-radius:1.5px;background:linear-gradient(#f7f9fc,#dfe4ec)"><div class="ab" style="left:1.5px;top:3px;width:4.5px;height:1px;background:#2b3a55"></div><div class="ab" style="left:3.3px;top:1px;width:1px;height:5px;background:#2b3a55"></div></div>
<div class="t" style="left:42px;top:638.08px;font-size:12.9px;font-weight:bold;color:#000">Bobsleigh</div>
<div class="t" style="right:384px;top:638.08px;font-size:12.9px;font-weight:bold;color:#000">344</div>
<div class="t" style="right:304px;top:638.08px;font-size:12.9px;font-weight:bold;color:#000">344</div>
<div class="ab" style="left:31px;top:658px;width:9px;height:9px;border:1px solid #a3afc0;border-radius:1.5px;background:linear-gradient(#f7f9fc,#dfe4ec)"><div class="ab" style="left:1.5px;top:3px;width:4.5px;height:1px;background:#2b3a55"></div><div class="ab" style="left:3.3px;top:1px;width:1px;height:5px;background:#2b3a55"></div></div>
<div class="t" style="left:42px;top:658.08px;font-size:12.9px;font-weight:bold;color:#000">Boxing</div>
<div class="t" style="right:448px;top:658.08px;font-size:12.9px;font-weight:bold;color:#000">842</div>
<div class="t" style="right:304px;top:658.08px;font-size:12.9px;font-weight:bold;color:#000">842</div>
<div class="t" style="left:29px;top:678.08px;font-size:12.9px;font-weight:bold;color:#000">Grand Total</div>
<div class="t" style="right:448px;top:678.08px;font-size:12.9px;font-weight:bold;color:#000">9502</div>
<div class="t" style="right:384px;top:678.08px;font-size:12.9px;font-weight:bold;color:#000">634</div>
<div class="t" style="right:304px;top:678.08px;font-size:12.9px;font-weight:bold;color:#000">10136</div>
<div class="ab" style="left:25px;top:451px;width:277px;height:23px;border:2px solid #217346"></div>
<div class="ab" style="left:297px;top:469px;width:7px;height:7px;background:#217346;border:1px solid #fff"></div>
<div class="ab" style="left:577px;top:213px;width:1px;height:550px;background:#a6a6a6"></div>
<div class="ab" style="left:581px;top:195px;width:15px;height:567px;background:#bababa"></div>
<div class="ab" style="left:581px;top:210px;width:15px;height:290px;background:#fff;border:1px solid #ababab"></div>
<div class="ab" style="left:581px;top:195px;width:15px;height:16px;background:#fff;border:1px solid #ababab"><div class="ab" style="left:3px;top:5px;border-left:4px solid transparent;border-right:4px solid transparent;border-bottom:4px solid #555"></div></div>
<div class="ab" style="left:581px;top:748px;width:15px;height:15px;background:#fff;border:1px solid #c6c6c6"><div class="ab" style="left:3px;top:5px;border-left:4px solid transparent;border-right:4px solid transparent;border-top:4px solid #555"></div></div>
<div class="ab" style="left:1px;top:762px;width:598px;height:28px;background:#e1e1e1"></div>
<div class="ab" style="left:1px;top:762px;width:577px;height:1px;background:#ababab"></div>
<div class="ab" style="left:28px;top:772px;border-top:4px solid transparent;border-bottom:4px solid transparent;border-right:4px solid #9a9a9a"></div>
<div class="ab" style="left:57px;top:772px;border-top:4px solid transparent;border-bottom:4px solid transparent;border-left:4px solid #9a9a9a"></div>
<div class="ab" style="left:101px;top:762px;width:66px;height:25px;background:#fff;border-left:1px solid #ababab;border-right:1px solid #ababab;border-bottom:2px solid #217346"></div>
<div class="t" style="left:113px;top:769px;font-size:13px;font-weight:bold;color:#217346">Sheet1</div>
<div class="t" style="left:178px;top:769px;font-size:13.6px;color:#262626">Sports</div>
<div class="ab" style="left:229px;top:766px;width:1px;height:19px;background:#ababab"></div>
<div class="t" style="left:242px;top:769px;font-size:13.6px;color:#262626">Hosts</div>
<div class="ab" style="left:287px;top:766px;width:1px;height:19px;background:#ababab"></div>
<div class="ab" style="left:321px;top:769px;width:16px;height:16px;border:1.5px solid #555;border-radius:50%"><div class="ab" style="left:3px;top:6px;width:7px;height:1.5px;background:#444"></div><div class="ab" style="left:5.8px;top:3px;width:1.5px;height:7px;background:#444"></div></div>
<div class="ab" style="left:360px;top:772px;width:2px;height:2px;background:#555"></div>
<div class="ab" style="left:360px;top:776px;width:2px;height:2px;background:#555"></div>
<div class="ab" style="left:360px;top:780px;width:2px;height:2px;background:#555"></div>
<div class="ab" style="left:377px;top:769px;width:201px;height:15px;background:#bababa;border:1px solid #ababab"></div>
<div class="ab" style="left:392px;top:769px;width:58px;height:15px;background:#fff;border:1px solid #ababab"></div>
<div class="ab" style="left:377px;top:769px;width:16px;height:15px;background:#fff;border:1px solid #ababab"><div class="ab" style="left:4px;top:3px;border-top:4px solid transparent;border-bottom:4px solid transparent;border-right:4px solid #444"></div></div>
<div class="ab" style="left:562px;top:769px;width:16px;height:15px;background:#fff;border:1px solid #ababab"><div class="ab" style="left:6px;top:3px;border-top:4px solid transparent;border-bottom:4px solid transparent;border-left:4px solid #444"></div></div>
<div class="ab" style="left:599px;top:195px;width:1px;height:593px;background:#ababab"></div>
<div class="t" style="left:613px;top:210.23px;font-size:20.4px;font-weight:normal;color:#217346;">PivotTable Fields</div>
<div class="t" style="left:612px;top:241.03px;font-size:10.6px;font-weight:normal;color:#262626;">ACTIVE</div>
<div class="ab" style="left:663px;top:236px;width:1px;height:20px;background:#c6c6c6"></div>
<div class="t" style="left:677px;top:241.03px;font-size:10.6px;font-weight:bold;color:#217346;">ALL</div>
<div class="t" style="left:612px;top:271.34px;font-size:12px;font-weight:normal;color:#262626;">Choose fields to add to report:</div>
<div class="ab" style="left:611px;top:303px;width:234px;height:185px;background:#fff"></div>
<div class="ab" style="left:801px;top:263px;width:44px;height:26px;background:#fff;border:1px solid #ababab"></div>
<div class="ab" style="left:829px;top:306px;width:15px;height:180px;background:#c8c8c8"></div>
<div class="ab" style="left:829px;top:306px;width:15px;height:14px;background:#fff;border:1px solid #ababab"><div class="ab" style="left:3px;top:4px;border-left:4px solid transparent;border-right:4px solid transparent;border-bottom:4px solid #555"></div></div>
<div class="ab" style="left:829px;top:337px;width:15px;height:96px;background:#fff;border:1px solid #ababab"></div>
<div class="ab" style="left:829px;top:472px;width:15px;height:14px;background:#fff;border:1px solid #ababab"><div class="ab" style="left:3px;top:4px;border-left:4px solid transparent;border-right:4px solid transparent;border-top:4px solid #555"></div></div>
<div class="t" style="left:647px;top:304.68px;font-size:11.6px;font-weight:bold;color:#262626;">Events</div>
<div class="t" style="left:666px;top:320.68px;font-size:11.6px;font-weight:bold;color:#262626;">SDE</div>
<div class="t" style="left:665px;top:342.60px;font-size:11.7px;font-weight:normal;color:#262626;">More Fields</div>
<div class="t" style="left:647px;top:372.88px;font-size:11.6px;font-weight:bold;color:#262626;">Hosts</div>
<div class="t" style="left:666px;top:389.22px;font-size:11.2px;font-weight:bold;color:#262626;">Locations</div>
<div class="t" style="left:665px;top:410.90px;font-size:11.7px;font-weight:normal;color:#262626;">More Fields</div>
<div class="t" style="left:647px;top:441.18px;font-size:11.6px;font-weight:bold;color:#262626;">Medals</div>
<div class="t" style="left:647px;top:471.10px;font-size:11.7px;font-weight:normal;color:#262626;">Sports</div>
<div class="ab" style="left:613px;top:504px;width:236px;height:0;border-top:1px dotted #b5b5b5"></div>
<div class="t" style="left:615px;top:510.18px;font-size:11.6px;font-weight:normal;color:#262626;">Drag fields between areas below:</div>
<div class="t" style="left:637px;top:545.28px;font-size:10.3px;font-weight:normal;color:#262626;">FILTERS</div>
<div class="t" style="left:755px;top:544.43px;font-size:11.3px;font-weight:normal;color:#262626;">COLUMNS</div>
<div class="t" style="left:637px;top:650.03px;font-size:10.6px;font-weight:normal;color:#262626;">ROWS</div>
<div class="t" style="left:755px;top:650.03px;font-size:10.6px;font-weight:normal;color:#262626;">VALUES</div>
<div class="ab" style="left:614px;top:561px;width:109px;height:72px;background:#fff"></div>
<div class="ab" style="left:732px;top:561px;width:114px;height:72px;background:#fff"></div>
<div class="ab" style="left:614px;top:666px;width:109px;height:72px;background:#fff"></div>
<div class="ab" style="left:732px;top:666px;width:114px;height:72px;background:#fff"></div>
<div class="ab" style="left:615px;top:563px;width:106px;height:18px;background:#fff;border:1px solid #d0d0d0"></div>
<div class="t" style="left:622px;top:567.34px;font-size:12px;font-weight:normal;color:#262626;">Medal</div>
<div class="ab" style="left:705px;top:572px;border-left:4px solid transparent;border-right:4px solid transparent;border-top:4px solid #222"></div>
<div class="ab" style="left:733px;top:563px;width:111px;height:18px;background:#fff;border:1px solid #d0d0d0"></div>
<div class="t" style="left:740px;top:567.34px;font-size:12px;font-weight:normal;color:#262626;">Locations</div>
<div class="ab" style="left:828px;top:572px;border-left:4px solid transparent;border-right:4px solid transparent;border-top:4px solid #222"></div>
<div class="ab" style="left:615px;top:668px;width:106px;height:18px;background:#fff;border:1px solid #d0d0d0"></div>
<div class="t" style="left:622px;top:672.34px;font-size:12px;font-weight:normal;color:#262626;">SDE</div>
<div class="ab" style="left:705px;top:677px;border-left:4px solid transparent;border-right:4px solid transparent;border-top:4px solid #222"></div>
<div class="ab" style="left:733px;top:668px;width:111px;height:18px;background:#fff;border:1px solid #d0d0d0"></div>
<div class="t" style="left:740px;top:672.34px;font-size:12px;font-weight:normal;color:#262626;">Count of Medal</div>
<div class="ab" style="left:828px;top:677px;border-left:4px solid transparent;border-right:4px solid transparent;border-top:4px solid #222"></div>
<div class="ab" style="left:614px;top:762px;width:13px;height:13px;background:#fff;border:1px solid #ababab"></div>
<div class="t" style="left:633px;top:763.10px;font-size:11.7px;font-weight:normal;color:#262626;">Defer Layout Update</div>
<div class="ab" style="left:793px;top:757px;width:52px;height:22px;background:#f9f9f9"></div>
<div class="t" style="left:797px;top:763.69px;font-size:11px;font-weight:normal;color:#7a7a7a;">UPDATE</div>
<svg class="ab" style="left:600px;top:190px" width="260" height="600" viewBox="600 190 260 600">
<path d="M819 214 h9 l-4.5 5z" fill="#777"/>
<path d="M836.5 211.5 L845.5 220.5 M845.5 211.5 L836.5 220.5" stroke="#666" stroke-width="2"/>
<g transform="translate(817.5 276)" fill="#9a9a9a"><circle r="4.6"/><rect x="-1.5" y="-6.4" width="3" height="12.8"/><rect x="-1.5" y="-6.4" width="3" height="12.8" transform="rotate(45)"/><rect x="-1.5" y="-6.4" width="3" height="12.8" transform="rotate(90)"/><rect x="-1.5" y="-6.4" width="3" height="12.8" transform="rotate(135)"/><circle r="2" fill="#fff"/></g>
<path d="M833 274 h7 l-3.5 3.8z" fill="#555"/>
<!-- events -->
<path d="M623 309 L623 315 L617 315 Z" fill="#555"/>
<rect x="628.5" y="304.5" width="12" height="12" fill="#fff" stroke="#777"/>
<rect x="628" y="304" width="13" height="2" fill="#777"/>
<path d="M629 309.5 H640 M629 312.5 H640 M632.5 306 V316 M636.5 306 V316" stroke="#aaa"/>
<path d="M636 310 h7 v7 q-3.5 2 -7 0 z" fill="#e3b266"/><ellipse cx="639.5" cy="310" rx="3.5" ry="1.3" fill="#f0cf8f"/>
<path d="M635.5 320.5 L640 325.5 L635.5 330.5 Z" fill="#fff" stroke="#666"/>
<rect x="647.5" y="320.5" width="13" height="13" fill="#fff" stroke="#a0a0a0"/>
<path d="M650 327 L653 330 L658.5 323.5" stroke="#666" stroke-width="1.3" fill="none"/>
<path d="M813 319 h10 l-3.8 4.5 v5 l-2.4 1.3 v-6.3 z" fill="#8a8a8a"/>
<path d="M635.5 343.5 L640 348.5 L635.5 353.5 Z" fill="#fff" stroke="#666"/>
<path d="M646 343 h6 l1.5 1.5 h8.5 v11 h-16 z" fill="#e8b870"/>
<rect x="650.5" y="347.5" width="12" height="8" fill="#fff" stroke="#555"/>
<path d="M653 353 h1.3 M655.8 353 h1.3 M658.6 353 h1.3" stroke="#333" stroke-width="1.3"/>
<!-- hosts -->
<path d="M623 377 L623 383 L617 383 Z" fill="#555"/>
<rect x="629.5" y="374.5" width="12" height="12" fill="#fff" stroke="#777"/>
<rect x="629" y="374" width="13" height="2" fill="#777"/>
<path d="M630 379.5 H641 M630 382.5 H641 M633.5 376 V386 M637.5 376 V386" stroke="#aaa"/>
<path d="M635.5 389.5 L640 394.5 L635.5 399.5 Z" fill="#fff" stroke="#666"/>
<rect x="647.5" y="387.5" width="13" height="13" fill="#fff" stroke="#a0a0a0"/>
<path d="M650 394 L653 397 L658.5 390.5" stroke="#666" stroke-width="1.3" fill="none"/>
<path d="M635.5 411.5 L640 416.5 L635.5 421.5 Z" fill="#fff" stroke="#666"/>
<path d="M646 411 h6 l1.5 1.5 h8.5 v11 h-16 z" fill="#e8b870"/>
<rect x="650.5" y="415.5" width="12" height="8" fill="#fff" stroke="#555"/>
<path d="M653 421 h1.3 M655.8 421 h1.3 M658.6 421 h1.3" stroke="#333" stroke-width="1.3"/>
<!-- medals -->
<path d="M617.5 441.5 L622 446.5 L617.5 451.5 Z" fill="#fff" stroke="#666"/>
<rect x="628.5" y="440.5" width="12" height="12" fill="#fff" stroke="#777"/>
<rect x="628" y="440" width="13" height="2" fill="#777"/>
<path d="M629 445.5 H640 M629 448.5 H640 M632.5 442 V452 M636.5 442 V452" stroke="#aaa"/>
<path d="M636 446 h7 v7 q-3.5 2 -7 0 z" fill="#e3b266"/><ellipse cx="639.5" cy="446" rx="3.5" ry="1.3" fill="#f0cf8f"/>
<!-- sports -->
<path d="M617.5 471.5 L622 476.5 L617.5 481.5 Z" fill="#fff" stroke="#666"/>
<rect x="629.5" y="471.5" width="12" height="12" fill="#fff" stroke="#777"/>
<rect x="629" y="471" width="13" height="2" fill="#777"/>
<path d="M630 476.5 H641 M630 479.5 H641 M633.5 473 V483 M637.5 473 V483" stroke="#aaa"/>
<!-- area icons -->
<path d="M618 543 h11 l-4 5 v6 l-3 0 v-6 z" fill="#8a8a8a"/>
<path d="M737.5 544 V553 M740.5 544 V553 M743.5 544 V553 M745.5 544 V553" stroke="#8a8a8a" stroke-width="1"/>
<path d="M619 650.5 H629 M619 652.5 H629 M619 654.5 H629 M619 656.5 H629 M619 658.5 H629" stroke="#8a8a8a" stroke-width="1"/>
<text x="736" y="659" font-family="Liberation Sans" font-size="13" fill="#8a8a8a">&#931;</text>
</svg>
<div class="ab" style="left:0;top:790px;width:860px;height:23px;background:#333"></div>
<svg class="ab" style="left:0;top:790px" width="860" height="23" viewBox="0 790 860 23">
<rect x="556" y="790" width="38" height="23" fill="#000"/>
<path d="M566.5 793.5 h15 v15 h-15 z M566.5 798.5 h15 M566.5 803.5 h15 M571.5 793.5 v15 M576.5 793.5 v15" stroke="#fff" fill="none"/>
<rect x="606.5" y="794.5" width="13" height="13" fill="none" stroke="#ddd"/>
<rect x="608.5" y="796.5" width="9" height="9" fill="none" stroke="#ddd"/>
<path d="M610 799.5 h6 M610 801.5 h6 M610 803.5 h6" stroke="#ddd"/>
<rect x="643.5" y="794.5" width="13" height="13" fill="none" stroke="#ddd"/>
<rect x="644" y="794" width="10" height="9" fill="#eee"/><rect x="649" y="794" width="1.5" height="7" fill="#333"/>
<rect x="676" y="800" width="5" height="2" fill="#eee"/>
<rect x="685" y="800" width="100" height="1" fill="#ddd"/>
<rect x="733" y="794" width="4" height="12" fill="#eee"/>
<rect x="789" y="800" width="8" height="2" fill="#eee"/><rect x="792" y="797" width="2" height="8" fill="#eee"/>
</svg>
<div class="t" style="left:8.0px;top:795.94px;font-size:10.7px;font-weight:normal;color:#fff;transform:scaleX(0.909);transform-origin:0 0">READY</div>
<div class="t" style="left:811.5px;top:795.57px;font-size:11.5px;font-weight:normal;color:#fff;transform:scaleX(0.952);transform-origin:0 0">100%</div>
<div class="ab" style="left:0;top:0;width:1px;height:813px;background:#3f3f3f"></div>
<div class="ab" style="left:859px;top:0;width:1px;height:813px;background:#3f3f3f"></div>
</body></html>
